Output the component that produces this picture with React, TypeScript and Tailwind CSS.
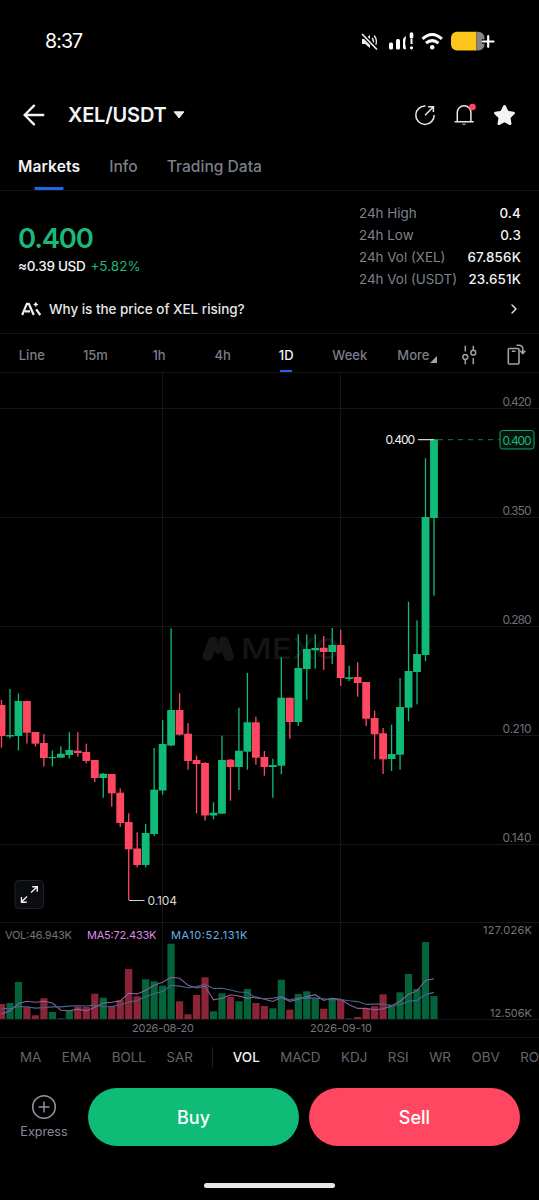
import React, { useState } from "react";
import { ArrowLeft, ChevronRight, Star } from "lucide-react";

// direction, body top, body bottom, wick top, wick bottom, top of the volume bar
type Candle = ["u" | "d", number, number, number, number, number];

const candles: Candle[] = [
  ["d", 705, 736, 700, 747.7, 1004],
  ["u", 735, 736.5, 689, 738.5, 1003],
  ["u", 701, 736, 693.5, 750.5, 982],
  ["d", 701, 732.7, 701, 743.5, 1007.3],
  ["d", 732, 743.7, 732, 746.5, 1015.3],
  ["d", 743, 758, 734, 766.5, 998.3],
  ["u", 757, 758.2, 750.5, 766.5, 1012],
  ["u", 753.7, 757.7, 746.3, 757.7, 1018.3],
  ["u", 750, 755, 732.3, 758.5, 1010.3],
  ["d", 750.7, 753, 732.3, 756.7, 1006.7],
  ["d", 752, 761, 743.7, 763.3, 1007],
  ["d", 760, 778, 760, 782, 993.7],
  ["u", 773.7, 778, 773, 797.7, 997.7],
  ["d", 774, 793.3, 774, 806.7, 1006],
  ["d", 792.7, 823, 788.3, 827, 1000.3],
  ["d", 822, 849.3, 813.3, 900.3, 969],
  ["d", 848.5, 865, 832.3, 867.3, 996.3],
  ["u", 833, 865, 824, 867.3, 979.3],
  ["u", 789.7, 834, 748, 836.3, 981.3],
  ["u", 744, 790.5, 720, 794.7, 985.7],
  ["u", 710, 745.5, 628.3, 746, 943.7],
  ["d", 710, 734.7, 693.3, 735.5, 1001.3],
  ["d", 733.7, 761, 723, 769.7, 1014.3],
  ["d", 760, 764, 755.7, 813.3, 995],
  ["d", 763, 815.5, 762, 820.7, 977.3],
  ["u", 812.7, 815.5, 802.3, 819.3, 1011.3],
  ["u", 760, 813.7, 735.7, 813.7, 993.3],
  ["d", 759.7, 767, 759, 800.7, 997],
  ["u", 750.7, 767, 707.7, 790, 1001.3],
  ["u", 722.3, 751.7, 673, 769.7, 989],
  ["d", 722.3, 757.7, 716.7, 764.7, 1003],
  ["d", 757, 767, 751, 775.7, 1006],
  ["u", 765, 767, 758.7, 797.7, 1008.3],
  ["u", 697.7, 765.7, 657.3, 774.3, 979.7],
  ["d", 697.7, 722, 697.7, 738.7, 1009.7],
  ["u", 668, 722, 634.3, 726, 994],
  ["u", 649, 669, 634.3, 699.7, 991.3],
  ["u", 648, 650.3, 634.3, 668.7, 999],
  ["d", 647.7, 652, 636, 670, 1008.7],
  ["u", 645, 652, 628, 664, 998],
  ["d", 645, 678, 629.7, 686, 1000],
  ["u", 677.3, 679, 665.7, 681, 1018.3],
  ["d", 677, 683, 662.3, 696.7, 1017],
  ["d", 682, 718.7, 682, 726, 1008.3],
  ["d", 718, 734.3, 710.7, 759, 1006.3],
  ["d", 733.3, 759.3, 728, 774, 994.3],
  ["u", 754, 759, 724.7, 771, 1004.7],
  ["u", 707, 754.7, 678, 769.7, 992.3],
  ["u", 671, 707.7, 601.7, 721.3, 974],
  ["u", 654, 672, 620.3, 704.3, 989],
  ["u", 517, 655, 458.3, 661, 942],
  ["u", 439.3, 518, 439.3, 595.7, 996],
];

const VOL_BASE = 1019;
// volumes just left of the visible range, needed by the moving averages
const earlier = [16, 16, 16, 16, 15, 0.5, 0.5, 0.5, 8.8];
const volumes = [...earlier, ...candles.map((c) => VOL_BASE - c[5])];

const centerX = (i: number) => 1.5 + 8.48 * i;

const averageLine = (n: number) =>
  candles
    .map((_, i) => {
      const end = i + earlier.length + 1;
      const sum = volumes.slice(end - n, end).reduce((a, b) => a + b, 0);
      return `${centerX(i).toFixed(1)},${(VOL_BASE - sum / n).toFixed(1)}`;
    })
    .join(" ");

const stats = [
  ["24h High", "0.4"],
  ["24h Low", "0.3"],
  ["24h Vol (XEL)", "67.856K"],
  ["24h Vol (USDT)", "23.651K"],
];

const intervals = ["Line", "15m", "1h", "4h", "1D", "Week", "More"];
const mainIndicators = ["MA", "EMA", "BOLL", "SAR"];
const subIndicators = ["VOL", "MACD", "KDJ", "RSI", "WR", "OBV", "ROC"];

const StatusBar: React.FC = () => (
  <div className="flex h-[81px] shrink-0 items-center justify-between pl-[45px] pr-[44px]">
    <span className="pt-0.5 text-[19.5px] tracking-[-0.9px]">8:37</span>
    <svg width="136" height="24" viewBox="359 28.500 136 24" fill="none">
      <path d="M362 38.500h3l5-4v13l-5-4h-3z" fill="#eee" />
      <path d="M372.500 38q1.800 3 0 6M374.500 35.500q4 5.500 0 11" stroke="#ddd" strokeWidth="1.500" strokeLinecap="round" />
      <path d="M362.500 34L377.500 49" stroke="#000" strokeWidth="4" />
      <path d="M362.500 34L376.500 48.500" stroke="#eee" strokeWidth="1.700" strokeLinecap="round" />
      <rect x="389" y="42" width="4" height="7" rx="1.500" fill="#fff" />
      <rect x="396" y="38.500" width="4" height="10.500" rx="1.500" fill="#fff" />
      <path d="M406 35.500c-2.500 1.500-3 3-3 5v6.500c0 1.300 1 2 3 2q-1.700-7 0-13.500" fill="#fff" />
      <path d="M411.500 33.500v3" stroke="#fff" strokeWidth="3.600" strokeLinecap="round" />
      <path d="M411.500 38.500v5" stroke="#fff" strokeWidth="2" />
      <circle cx="411.500" cy="47.300" r="1.600" fill="#fff" />
      <path d="M422.500 38.300q9.700-8.600 19.400 0M426 42.700q6.200-5.200 12.400 0" stroke="#fff" strokeWidth="3" />
      <circle cx="432.200" cy="46.700" r="2.200" fill="#fff" />
      <path d="M457 31.300h19.500v18.700H457a6 6 0 0 1-6-6v-6.700a6 6 0 0 1 6-6z" fill="#fcc61b" />
      <path d="M476.500 31.300h2a6 6 0 0 1 6 6V44a6 6 0 0 1-6 6h-2z" fill="#858585" />
      <path d="M482 41h12M488 35v12" stroke="#000" strokeWidth="4.500" />
      <path d="M483 41h10.500M488.200 35.700v10.600" stroke="#fff" strokeWidth="2.200" strokeLinecap="round" />
    </svg>
  </div>
);

const Header: React.FC = () => (
  <div className="flex h-[68px] shrink-0 items-center pl-[18px] pr-[23px]">
    <ArrowLeft className="h-8 w-8 text-gray-100" strokeWidth={1.700} />
    <h1 className="ml-[18px] text-[20px] font-semibold tracking-[-0.200px] text-gray-100">XEL/USDT</h1>
    <svg className="ml-[6px]" width="12" height="8" viewBox="0 0 12 8">
      <path d="M1.200.8h9.600L6 7z" fill="#eee" stroke="#eee" strokeLinejoin="round" />
    </svg>
    <div className="ml-auto flex items-center gap-[15px]">
      <svg width="24" height="24" viewBox="0 0 24 24" fill="none" stroke="#e8e8e8" strokeWidth="1.500">
        <path d="M12.500 3A9.200 9.200 0 1 0 21.200 12" />
        <path d="M12 12.300 20.200 4M15 3.800h5.400v5.200" />
      </svg>
      <svg width="24" height="24" viewBox="0 0 24 24" fill="none" stroke="#e8e8e8" strokeWidth="1.500">
        <path d="M5.300 18.500V9.500a6.800 6.800 0 0 1 13.600 0v9M2.700 18.700h19" />
        <path d="M9.800 20.800h4.400q-2.200 2-4.400 0z" fill="#e8e8e8" stroke="none" />
        <circle cx="20.500" cy="4" r="3.300" fill="#ff4761" stroke="none" />
      </svg>
      <Star className="ml-0.5 h-[23px] w-[23px] fill-gray-100 text-gray-100" strokeWidth={1.800} />
    </div>
  </div>
);

const Summary: React.FC = () => (
  <div className="h-[143px] shrink-0 border-b border-[#15171a] pl-[18px] pr-[18px]">
    <div className="flex justify-between pt-[11px]">
      <div>
        <div className="mt-[16px] text-[27.500px] leading-[40px] font-semibold tracking-[-1.200px] text-[#1bb879]">0.400</div>
        <div className="flex gap-[5px] text-[13.500px] leading-4 font-medium">
          <span className="tracking-[-0.300px] text-gray-100">≈0.39 USD</span>
          <span className="font-normal text-[#1bb879]">+5.82%</span>
        </div>
      </div>
      <div className="w-[162px]">
        {stats.map(([label, value]) => (
          <div key={label} className="flex justify-between text-[13.400px] leading-[22px] whitespace-nowrap">
            <span className="text-[#7e838e]">{label}</span>
            <span className="font-medium tracking-[0.150px] text-gray-100">{value}</span>
          </div>
        ))}
      </div>
    </div>
    <div className="mt-2 flex h-[22px] items-center">
      <svg className="ml-[3px]" width="21" height="14" viewBox="0 0 21 14" fill="none" stroke="#f0f0f0" strokeWidth="2.200" strokeLinejoin="round">
        <path d="M1.200 13 5.800 1.800H7.800L12.800 13M4 9.400H9M15.200 7.300 19.300 13" />
        <path d="M14.800-.5q.3 2.400 2.700 2.900-2.400.4-2.700 2.900-.4-2.500-2.700-2.900 2.300-.5 2.700-2.900z" fill="#f0f0f0" stroke="none" />
      </svg>
      <span className="ml-[7px] text-[13.500px] font-medium tracking-[-0.030px] text-gray-200">Why is the price of XEL rising?</span>
      <ChevronRight className="-mr-[1px] ml-auto h-4 w-4 text-gray-200" />
    </div>
  </div>
);

const Chart: React.FC = () => (
  <svg className="block shrink-0" width="539" height="665" viewBox="0 373 539 665" fontFamily="Inter, sans-serif" fontSize="12">
    <g stroke="#141618" strokeWidth="1">
      {[408.5, 517.5, 626.5, 735.5, 844.5].map((y) => (
        <path key={y} d={`M0 ${y}H539`} />
      ))}
      <path d="M162.500 373V1019M340.500 373V1019" />
      <path d="M0 922.500H539M0 1019.500H539M0 1037.500H539" />
    </g>

    {/* watermark */}
    <g stroke="#131517" strokeWidth="10" strokeLinecap="round" fill="none">
      <path d="M207.500 656 213 641.500M223.500 641.500 229 656" />
      <path d="M213 641.500 218.300 650 223.500 641.500" strokeWidth="7" strokeLinejoin="round" />
    </g>
    <text x="241" y="659" fontSize="29" fontWeight="500" fill="#131517" textLength="98" lengthAdjust="spacingAndGlyphs">MEXC</text>

    {candles.map(([dir, top, bottom, high, low, vol], i) => {
      const color = dir === "u" ? "#10bb78" : "#ff4761";
      const x = centerX(i);
      return (
        <g key={i}>
          <rect x={x - 0.65} y={high} width="1.300" height={low - high} fill={color} />
          <rect x={x - 3.9} y={top} width="7.800" height={bottom - top} fill={color} />
          <rect x={x - 3.6} y={vol} width="7.200" height={VOL_BASE - vol} fill={dir === "u" ? "#05633c" : "#8b2437"} />
        </g>
      );
    })}
    <polyline points={averageLine(5)} fill="none" stroke="#8d609b" strokeWidth="1.100" />
    <polyline points={averageLine(10)} fill="none" stroke="#44688b" strokeWidth="1.100" />

    {/* high, low and last price */}
    <path d="M418 439.700H434M129 900.500H144.500" stroke="#d0d0d0" strokeWidth="1.200" />
    <text x="385.500" y="444" fill="#f0f0f0" textLength="29.500">0.400</text>
    <text x="147.500" y="905" fill="#d8d8d8" textLength="29.500">0.104</text>
    <path d="M438 439.700H500" stroke="#0c7d53" strokeDasharray="5 5" />
    <rect x="500" y="430.500" width="34" height="18.500" rx="2.500" fill="#07150f" stroke="#10a66c" />
    <text x="502.500" y="444.500" fill="#14b877" textLength="29">0.400</text>

    <g fill="#6c7077">
      {["0.420", "0.350", "0.280", "0.210", "0.140"].map((label, i) => (
        <text key={label} x="502.500" y={406.4 + i * 109} textLength="29">{label}</text>
      ))}
    </g>
    <g fontSize="11" fill="#71757c">
      <text x="483" y="934.300" textLength="49">127.026K</text>
      <text x="490" y="1016.500" textLength="42">12.506K</text>
      <text x="132" y="1032" textLength="62">2026-08-20</text>
      <text x="310" y="1032" textLength="62">2026-09-10</text>
      <text x="5" y="939.300" textLength="67">VOL:46.943K</text>
      <text x="87" y="939.300" textLength="69.500" fill="#dc8ce4">MA5:72.433K</text>
      <text x="171" y="939.300" textLength="76.500" fill="#69b0e6">MA10:52.131K</text>
    </g>

    {/* full screen button */}
    <rect x="15" y="880.500" width="28.500" height="28" rx="4" fill="#0a0c0f" stroke="#202328" />
    <path d="M31 892.500 37 887M32.200 886.700H37.300V891.800M27 896.500 21.500 902M21.500 897V902.300H26.700" fill="none" stroke="#eee" strokeWidth="1.400" />
  </svg>
);

const App: React.FC = () => {
  const [tab, setTab] = useState("Markets");
  const [interval, setInterval] = useState("1D");

  return (
    <div className="flex h-[1200px] w-[539px] flex-col overflow-hidden bg-black font-['Inter',sans-serif] text-white">
      <StatusBar />
      <Header />

      <div className="flex h-[42px] shrink-0 gap-[29px] border-b border-[#15171a] pl-[18px] text-[15.600px] font-medium">
        {["Markets", "Info", "Trading Data"].map((name) => (
          <button
            key={name}
            onClick={() => setTab(name)}
            className={`relative flex h-[35px] items-center ${tab === name ? "font-semibold tracking-[0.1px] text-gray-100" : "text-[#7a7f89]"}`}
          >
            {name}
            {tab === name && <span className="absolute -bottom-[6px] left-1/2 h-[3px] w-[29px] -translate-x-1/2 bg-[#2463e8]" />}
          </button>
        ))}
      </div>

      <Summary />

      <div className="flex h-[39px] shrink-0 items-center border-b border-[#15171a] text-[13px] font-medium">
        <div className="flex h-full">
          {intervals.map((name) => (
            <button
              key={name}
              onClick={() => setInterval(name)}
              className={`relative flex w-[63.600px] items-center justify-center pt-[5px] ${interval === name ? "text-gray-100" : "text-[#7a7f89]"}`}
            >
              {name}
              {name === "More" && (
                <svg className="absolute bottom-[9px] right-[8px]" width="7" height="7" viewBox="0 0 7 7">
                  <path d="M7 0V7H0z" fill="#a2a6ae" />
                </svg>
              )}
              {interval === name && <span className="absolute bottom-0 h-[2px] w-3 bg-[#2463e8]" />}
            </button>
          ))}
        </div>
        <svg className="ml-[12px] mt-[3px]" width="24" height="24" viewBox="0 0 24 24" fill="none" stroke="#9da1a9" strokeWidth="1.500">
          <path d="M8.300 2.700V8.500M8.300 16.600V21.300M16.300 2.700V7M16.300 15V21.300" />
          <circle cx="8.300" cy="14" r="2.400" />
          <circle cx="16.300" cy="9.700" r="2.400" />
        </svg>
        <svg className="ml-[22px] mt-[3px]" width="24" height="24" viewBox="0 0 24 24" fill="none" stroke="#9da1a9" strokeWidth="1.600">
          <rect x="5.300" y="5.500" width="10.700" height="15.500" rx="1" />
          <path d="M8.800 8.200h3.700M13.500 2.300h2.300q4 0 4 4V10M17.200 7.800l2.600 2.700 2.500-2.700" />
        </svg>
      </div>

      <Chart />

      <div className="flex h-[38px] shrink-0 items-center gap-[20.500px] overflow-hidden pl-5 text-[13.400px] whitespace-nowrap text-[#62666e]">
        {mainIndicators.map((name) => (
          <span key={name}>{name}</span>
        ))}
        <span className="-ml-[1px] -mr-[1px] h-5 w-px shrink-0 bg-[#1c1f23]" />
        {subIndicators.map((name) => (
          <span key={name} className={name === "VOL" ? "font-medium text-gray-100" : ""}>{name}</span>
        ))}
      </div>

      <div className="flex shrink-0 items-center pl-[18px] pr-[19px] pt-3">
        <div className="flex w-[52px] flex-col items-center pb-px text-[12.600px] leading-4 text-[#858a94]">
          <svg className="mb-[4px]" width="26" height="26" viewBox="0 0 26 26" fill="none" stroke="#8d929b" strokeWidth="1.500">
            <circle cx="13" cy="13" r="11.300" />
            <path d="M7.500 13h11M13 7.500v11" />
          </svg>
          Express
        </div>
        <button className="ml-[18px] h-[58px] flex-1 rounded-full bg-[#0ebb77] pt-px text-lg font-medium">Buy</button>
        <button className="ml-[10px] h-[58px] flex-1 rounded-full bg-[#ff4761] pt-px text-lg font-medium">Sell</button>
      </div>

      <div className="mx-auto mt-[37px] h-[5px] w-[131px] rounded-full bg-gray-200" />
    </div>
  );
};

export default App;
